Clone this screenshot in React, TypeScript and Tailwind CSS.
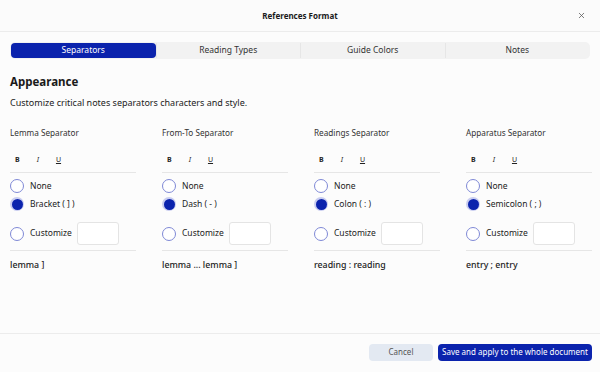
import { X } from "lucide-react";

const columns = [
  { title: "Lemma Separator", option: "Bracket ( ] )", preview: "lemma ]" },
  { title: "From-To Separator", option: "Dash ( - )", preview: "lemma ... lemma ]" },
  { title: "Readings Separator", option: "Colon ( : )", preview: "reading : reading" },
  { title: "Apparatus Separator", option: "Semicolon ( ; )", preview: "entry ; entry" },
];

const tabs = ["Separators", "Reading Types", "Guide Colors", "Notes"];

function Radio({ checked }: { checked?: boolean }) {
  if (checked) {
    return (
      <span className="flex h-[14px] w-[14px] shrink-0 items-center justify-center rounded-full bg-[#c9cdf0]">
        <span className="h-[11px] w-[11px] rounded-full bg-[#0b23ad]" />
      </span>
    );
  }
  return <span className="h-[14px] w-[14px] shrink-0 rounded-full border-[1.5px] border-[#7f89d6] bg-white" />;
}

function SeparatorColumn({ title, option, preview }: { title: string; option: string; preview: string }) {
  return (
    <div className="w-[126px]">
      <div className="flex h-[12px] items-center text-[8.2px] text-[#333]">{title}</div>
      <div className="mt-[16px] flex h-[10px] items-center gap-[17px] pl-[5px] text-[7px] text-[#222]">
        <span className="font-bold">B</span>
        <span className="italic">I</span>
        <span className="underline">U</span>
      </div>
      <div className="mt-[7px] border-t border-[#e6e6e6]" />
      <div className="mt-[6px] flex h-[14px] items-center gap-[6px] text-[8.5px] text-[#222]">
        <Radio />
        <span>None</span>
      </div>
      <div className="mt-[4px] flex h-[14px] items-center gap-[6px] text-[8.5px] text-[#222]">
        <Radio checked />
        <span>{option}</span>
      </div>
      <div className="mt-[11px] flex h-[23px] items-center gap-[6px] text-[8.5px] text-[#222]">
        <Radio />
        <span>Customize</span>
        <span className="-ml-[1px] h-[23px] w-[42px] rounded-[3px] border border-[#e4e4e4] bg-white" />
      </div>
      <div className="mt-[5px] border-t border-[#e6e6e6]" />
      <div className="mt-[9px] flex h-[12px] items-center whitespace-nowrap text-[8.8px] font-medium text-[#222]">
        {preview}
      </div>
    </div>
  );
}

export default function App() {
  return (
    <div
      className="flex h-[372px] w-[600px] flex-col bg-[#fcfcfc]"
      style={{ fontFamily: '"Noto Sans", "Open Sans", sans-serif' }}
    >
      <header className="relative flex h-[32px] shrink-0 items-center justify-center border-b border-[#ececec] bg-[#fbfbfb]">
        <span className="text-[8px] font-bold text-[#1a1a1a]">References Format</span>
        <X className="absolute right-[14px] top-[11px] h-[9px] w-[9px] text-[#555]" strokeWidth={2} />
      </header>

      <div className="mx-[10px] mt-[10px] grid h-[17px] grid-cols-4 rounded-[5px] bg-[#f2f2f2] p-[1px]">
        {tabs.map((t, i) => (
          <div
            key={t}
            className={
              i === 0
                ? "flex items-center justify-center rounded-[4px] bg-[#0b23ad] text-[8.5px] text-white"
                : "flex items-center justify-center border-l border-[#e6e6e6] text-[8.5px] text-[#333]"
            }
          >
            {t}
          </div>
        ))}
      </div>

      <div className="px-[10px]">
        <h2 className="mt-[15px] text-[11.5px] font-bold leading-[16px] text-[#1a1a1a]">Appearance</h2>
        <p className="mt-[7px] text-[9px] leading-[12px] text-[#222]">
          Customize critical notes separators characters and style.
        </p>
        <div className="mt-[18px] grid grid-cols-[152px_152px_152px_126px]">
          {columns.map((c) => (
            <SeparatorColumn key={c.title} {...c} />
          ))}
        </div>
      </div>

      <footer className="mt-auto flex h-[39px] items-center justify-end gap-[5px] border-t border-[#ececec] px-[8px] pb-[2px]">
        <button className="h-[17px] w-[64px] rounded-[4px] bg-[#e3e9f2] text-[8px] text-[#555]">Cancel</button>
        <button className="h-[17px] w-[154px] rounded-[4px] bg-[#0b23ad] text-[8px] text-white">
          Save and apply to the whole document
        </button>
      </footer>
    </div>
  );
}
